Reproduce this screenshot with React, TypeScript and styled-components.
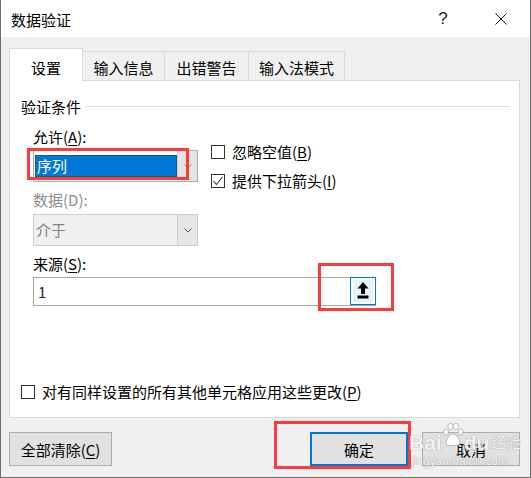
import React from "react";
import styled, { createGlobalStyle } from "styled-components";

const Global = createGlobalStyle`
  html, body { margin: 0; padding: 0; background: #ffffff; }
  body {
    font-family: "Noto Sans CJK SC", "Noto Sans", sans-serif;
    font-size: 15px;
    color: #000;
  }
  * { box-sizing: border-box; }
  u { text-decoration-thickness: 1px; text-underline-offset: 2px; }
`;

const Window = styled.div`
  position: relative;
  width: 531px;
  height: 478px;
  display: flex;
  flex-direction: column;
  background: #f0f0f0;
  border: 1px solid #6f6f6f;
  border-top: none;
  overflow: hidden;
`;

const TitleBar = styled.div`
  height: 37px;
  flex: none;
  display: flex;
  align-items: center;
  background: #ffffff;
  padding-left: 10px;
`;

const Title = styled.div`
  line-height: 20px;
  margin-top: 3px;
`;

const CaptionButton = styled.div<{ $first?: boolean }>`
  width: 58px;
  height: 37px;
  display: flex;
  align-items: center;
  justify-content: center;
  margin-left: ${(p) => (p.$first ? "auto" : "0")};
  font-family: "Liberation Sans", "DejaVu Sans", sans-serif;
  font-size: 17px;
  color: #222;
`;

const Body = styled.div`
  flex: 1;
  display: flex;
  flex-direction: column;
  padding: 11px 10px 0 8px;
`;

const TabStrip = styled.div`
  position: relative;
  z-index: 1;
  display: flex;
  align-items: flex-start;
  height: 33px;
  margin-bottom: -1px;
`;

const Tab = styled.div<{ $active?: boolean; $w: number }>`
  width: ${(p) => p.$w}px;
  height: ${(p) => (p.$active ? 33 : 29)}px;
  margin-top: ${(p) => (p.$active ? 0 : 3)}px;
  margin-left: ${(p) => (p.$active ? 0 : -1)}px;
  padding-top: ${(p) => (p.$active ? 9 : 6)}px;
  line-height: 20px;
  text-align: center;
  white-space: nowrap;
  background: ${(p) => (p.$active ? "#ffffff" : "#f0f0f0")};
  border: 1px solid #d9d9d9;
  border-bottom: none;
  position: relative;
  z-index: ${(p) => (p.$active ? 2 : 1)};
`;

const Panel = styled.div`
  height: 338px;
  flex: none;
  background: #ffffff;
  border: 1px solid #d9d9d9;
  display: flex;
  flex-direction: column;
  padding: 15px 9px 15px 11px;
`;

const GroupHeader = styled.div`
  display: flex;
  align-items: center;
  height: 20px;
`;

const GroupLine = styled.div`
  flex: 1;
  height: 1px;
  background: #dcdcdc;
  margin-left: 5px;
`;

const Indent = styled.div`
  display: flex;
  flex-direction: column;
  padding-left: 12px;
`;

const TopRow = styled.div`
  display: flex;
`;

const LeftCol = styled.div`
  width: 165px;
  display: flex;
  flex-direction: column;
`;

const RightCol = styled.div`
  display: flex;
  flex-direction: column;
  gap: 9px;
  margin-left: 13px;
  padding-top: 26px;
`;

const FieldLabel = styled.div<{ $mt: number; $disabled?: boolean }>`
  line-height: 20px;
  height: 20px;
  margin-top: ${(p) => p.$mt}px;
  color: ${(p) => (p.$disabled ? "#8d8d8d" : "#000")};
  white-space: nowrap;
`;

const Combo = styled.div<{ $mt: number; $disabled?: boolean }>`
  height: 32px;
  margin-top: ${(p) => p.$mt}px;
  display: flex;
  border: 1px solid ${(p) => (p.$disabled ? "#cccccc" : "#adadad")};
  background: ${(p) => (p.$disabled ? "#f0f0f0" : "#ffffff")};
`;

const ComboField = styled.div`
  flex: 1;
  display: flex;
  padding: 4px 0 4px 1px;
`;

const SelectedValue = styled.div`
  flex: 1;
  background: #0078d7;
  color: #ffffff;
  line-height: 20px;
  padding-left: 1px;
  border: 1px dotted #3a3a3a;
`;

const DisabledValue = styled.div`
  flex: 1;
  color: #838383;
  line-height: 30px;
  padding-left: 2px;
`;

const DropButton = styled.div<{ $disabled?: boolean }>`
  width: 20px;
  display: flex;
  align-items: center;
  justify-content: center;
  background: ${(p) => (p.$disabled ? "#e6e6e6" : "#e5e5e5")};
  border-left: 1px solid ${(p) => (p.$disabled ? "#d0d0d0" : "#cfcfcf")};
`;

const CheckRow = styled.div<{ $mt?: string }>`
  display: flex;
  align-items: center;
  gap: 7px;
  height: 20px;
  line-height: 20px;
  white-space: nowrap;
  margin-top: ${(p) => p.$mt ?? "0"};
`;

const Box = styled.div`
  width: 14px;
  height: 14px;
  flex: none;
  border: 1px solid #333333;
  background: #ffffff;
  display: flex;
  align-items: center;
  justify-content: center;
`;

const SourceInput = styled.div`
  width: 343px;
  height: 29px;
  margin-top: 3px;
  display: flex;
  border: 1px solid #a6a6a6;
`;

const SourceText = styled.div`
  flex: 1;
  line-height: 27px;
  padding-left: 4px;
  color: #1c2a3a;
`;

const RefButton = styled.div`
  width: 26px;
  height: 28px;
  margin: -1px -1px 0 0;
  border: 1px solid #0078d7;
  background: #e5f1fb;
  box-shadow: inset 0 0 0 2px #ffffff;
  display: flex;
  align-items: center;
  justify-content: center;
`;

const Footer = styled.div`
  display: flex;
  align-items: flex-start;
  margin-top: 14px;
`;

const Button = styled.div<{ $w: number; $default?: boolean; $push?: boolean; $ml?: number }>`
  width: ${(p) => p.$w}px;
  height: 34px;
  margin-left: ${(p) => (p.$push ? "auto" : `${p.$ml ?? 0}px`)};
  display: flex;
  align-items: center;
  justify-content: center;
  background: #e1e1e1;
  border: ${(p) => (p.$default ? "2px solid #0078d7" : "1px solid #adadad")};
  white-space: nowrap;
`;

const Annotation = styled.div<{ $x: number; $y: number; $w: number; $h: number }>`
  position: absolute;
  left: ${(p) => p.$x}px;
  top: ${(p) => p.$y}px;
  width: ${(p) => p.$w}px;
  height: ${(p) => p.$h}px;
  border: 3px solid #fb3c3c;
  z-index: 10;
  pointer-events: none;
`;

const Watermark = styled.div`
  position: absolute;
  left: 408px;
  top: 420px;
  z-index: 11;
  display: flex;
  flex-direction: column;
  align-items: flex-start;
  pointer-events: none;
  color: rgba(255, 255, 255, 0.9);
  text-shadow: 0 0 1px rgba(120, 120, 120, 0.5), 0 0 1px rgba(120, 120, 120, 0.5);
`;

const WatermarkTop = styled.div`
  display: flex;
  align-items: flex-end;
  height: 34px;
`;

const WatermarkBrand = styled.span`
  font-family: "Liberation Sans", Arial, sans-serif;
  font-weight: 700;
  font-size: 21px;
  line-height: 22px;
`;

const WatermarkCn = styled.span`
  font-size: 15px;
  line-height: 20px;
  margin-left: 2px;
  margin-bottom: 2px;
`;

const WatermarkUrl = styled.div`
  font-family: "Liberation Sans", Arial, sans-serif;
  font-size: 12px;
  line-height: 14px;
  margin-left: 2px;
`;

const Chevron = ({ color }: { color: string }) => (
  <svg width="8" height="5" viewBox="0 0 8 5">
    <polyline points="0.5,0.5 4,4 7.5,0.5" fill="none" stroke={color} strokeWidth="1" />
  </svg>
);

const Paw = () => (
  <svg width="22" height="30" viewBox="0 0 22 30" style={{ marginBottom: 2 }}>
    <g fill="rgba(255,255,255,0.9)" stroke="rgba(130,130,130,0.5)" strokeWidth="1">
      <ellipse cx="4" cy="10" rx="2.6" ry="3.2" />
      <ellipse cx="8.5" cy="4.5" rx="2.6" ry="3.2" />
      <ellipse cx="14" cy="4.5" rx="2.6" ry="3.2" />
      <ellipse cx="18.5" cy="10" rx="2.6" ry="3.2" />
      <path d="M11 12 C7 12 4 18 4 21 C4 24 8 24 11 23 C14 24 18 24 18 21 C18 18 15 12 11 12 Z" />
    </g>
  </svg>
);

export default function App() {
  return (
    <>
      <Global />
      <Window>
        <TitleBar>
          <Title>数据验证</Title>
          <CaptionButton $first>?</CaptionButton>
          <CaptionButton>
            <svg width="12" height="12" viewBox="0 0 12 12">
              <path d="M0.5 0.5 L11.5 11.5 M11.5 0.5 L0.5 11.5" stroke="#111" strokeWidth="1" />
            </svg>
          </CaptionButton>
        </TitleBar>
        <Body>
          <TabStrip>
            <Tab $active $w={74}>设置</Tab>
            <Tab $w={83}>输入信息</Tab>
            <Tab $w={85}>出错警告</Tab>
            <Tab $w={97}>输入法模式</Tab>
          </TabStrip>
          <Panel>
            <GroupHeader>
              <span>验证条件</span>
              <GroupLine />
            </GroupHeader>
            <Indent>
              <TopRow>
                <LeftCol>
                  <FieldLabel $mt={11}>
                    允许(<u>A</u>):
                  </FieldLabel>
                  <Combo $mt={3}>
                    <ComboField>
                      <SelectedValue>序列</SelectedValue>
                    </ComboField>
                    <DropButton>
                      <Chevron color="#8a8a8a" />
                    </DropButton>
                  </Combo>
                  <FieldLabel $mt={8} $disabled>
                    数据(D):
                  </FieldLabel>
                  <Combo $mt={4} $disabled>
                    <DisabledValue>介于</DisabledValue>
                    <DropButton $disabled>
                      <Chevron color="#555" />
                    </DropButton>
                  </Combo>
                </LeftCol>
                <RightCol>
                  <CheckRow>
                    <Box />
                    <span>
                      忽略空值(<u>B</u>)
                    </span>
                  </CheckRow>
                  <CheckRow>
                    <Box>
                      <svg width="12" height="12" viewBox="0 0 12 12">
                        <polyline points="1.5,6 4.5,9.5 10.5,2" fill="none" stroke="#333" strokeWidth="1.1" />
                      </svg>
                    </Box>
                    <span>
                      提供下拉箭头(<u>I</u>)
                    </span>
                  </CheckRow>
                </RightCol>
              </TopRow>
              <FieldLabel $mt={8}>
                来源(<u>S</u>):
              </FieldLabel>
              <SourceInput>
                <SourceText>1</SourceText>
                <RefButton>
                  <svg width="14" height="18" viewBox="0 0 14 18">
                    <path d="M7 0 L12.5 6.5 L9 6.5 L9 12 L5 12 L5 6.5 L1.5 6.5 Z" fill="#000" />
                    <rect x="1.5" y="13.5" width="11" height="3" fill="#000" />
                  </svg>
                </RefButton>
              </SourceInput>
            </Indent>
            <CheckRow $mt="auto">
              <Box />
              <span>
                对有同样设置的所有其他单元格应用这些更改(<u>P</u>)
              </span>
            </CheckRow>
          </Panel>
          <Footer>
            <Button $w={103}>
              全部清除(<u>C</u>)
            </Button>
            <Button $w={98} $default $push>
              确定
            </Button>
            <Button $w={98} $ml={14}>
              取消
            </Button>
          </Footer>
        </Body>
        <Annotation $x={26} $y={148} $w={162} $h={32} />
        <Annotation $x={317} $y={263} $w={76} $h={48} />
        <Annotation $x={273} $y={421} $w={137} $h={48} />
        <Watermark>
          <WatermarkTop>
            <WatermarkBrand>Bai</WatermarkBrand>
            <Paw />
            <WatermarkBrand>du</WatermarkBrand>
            <WatermarkCn>经验</WatermarkCn>
          </WatermarkTop>
          <WatermarkUrl>jingyan.baidu.com</WatermarkUrl>
        </Watermark>
      </Window>
    </>
  );
}
